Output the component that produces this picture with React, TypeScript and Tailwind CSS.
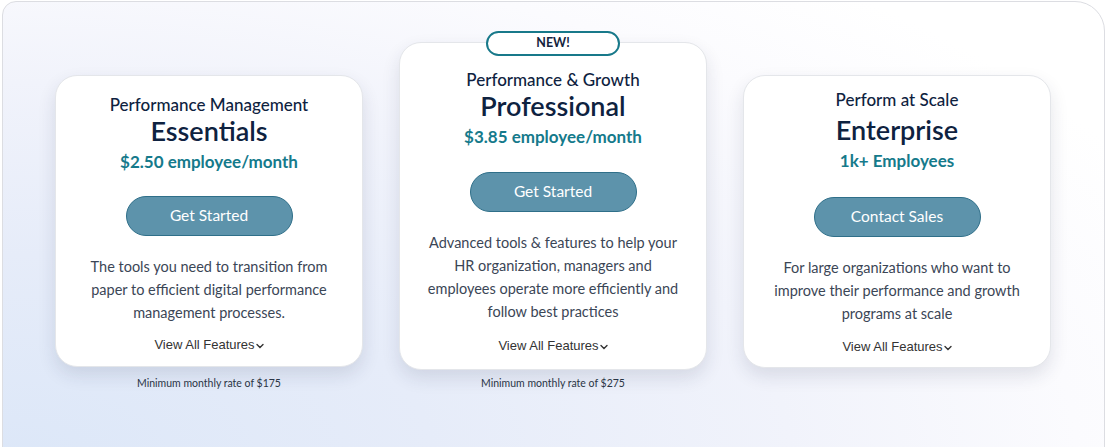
import React from 'react';

const FONT = { fontFamily: 'Lato, "Noto Sans", sans-serif' };

type Plan = {
  eyebrow: string;
  name: string;
  price: string;
  cta: string;
  lines: string[];
  minimum?: string;
  badge?: string;
  top: string;
  card: string;
  nameGap: string;
  priceGap: string;
  buttonGap: string;
  descGap: string;
  featuresGap: string;
  minGap?: string;
};

const plans: Plan[] = [
  {
    eyebrow: 'Performance Management',
    name: 'Essentials',
    price: '$2.50 employee/month',
    cta: 'Get Started',
    lines: ['The tools you need to transition from', 'paper to efficient digital performance', 'management processes.'],
    minimum: 'Minimum monthly rate of $175',
    top: 'mt-[73px]',
    card: 'pt-[18px] pb-[13px]',
    nameGap: 'mt-0',
    priceGap: 'mt-[3px]',
    buttonGap: 'mt-[21px]',
    descGap: 'mt-[19px]',
    featuresGap: 'mt-[13px]',
    minGap: 'mt-[9px]',
  },
  {
    eyebrow: 'Performance & Growth',
    name: 'Professional',
    price: '$3.85 employee/month',
    cta: 'Get Started',
    lines: [
      'Advanced tools & features to help your',
      'HR organization, managers and',
      'employees operate more efficiently and',
      'follow best practices',
    ],
    minimum: 'Minimum monthly rate of $275',
    badge: 'NEW!',
    top: 'mt-[40px]',
    card: 'pt-[26px] pb-[15px]',
    nameGap: 'mt-0',
    priceGap: 'mt-[3px]',
    buttonGap: 'mt-[22px]',
    descGap: 'mt-[19px]',
    featuresGap: 'mt-[15px]',
    minGap: 'mt-[6px]',
  },
  {
    eyebrow: 'Perform at Scale',
    name: 'Enterprise',
    price: '1k+ Employees',
    cta: 'Contact Sales',
    lines: ['For large organizations who want to', 'improve their performance and growth', 'programs at scale'],
    top: 'mt-[73px]',
    card: 'pt-[13px] pb-[12px]',
    nameGap: 'mt-[4px]',
    priceGap: 'mt-[3px]',
    buttonGap: 'mt-[23px]',
    descGap: 'mt-[19px]',
    featuresGap: 'mt-[14px]',
  },
];

function Chevron() {
  return (
    <svg width="8" height="6" viewBox="0 0 8 6" className="ml-[1px] mt-[1px]" aria-hidden>
      <path d="M1 1.5 L4 4.5 L7 1.5" fill="none" stroke="#333" strokeWidth="1.4" strokeLinecap="round" />
    </svg>
  );
}

function PlanCard({ plan }: { plan: Plan }) {
  return (
    <div className={`flex w-[308px] flex-col items-center ${plan.top}`}>
      <div className="relative w-full">
        {plan.badge && (
          <div className="absolute left-1/2 top-[-11px] flex h-[25px] w-[134px] -translate-x-1/2 items-center justify-center rounded-full border-2 border-[#18798a] bg-white text-[12.5px] font-bold text-[#14233d]">
            {plan.badge}
          </div>
        )}
        <div
          className={`flex w-full flex-col items-center rounded-[22px] border border-[#e4e6ea] bg-white shadow-[0_8px_18px_rgba(30,40,70,0.12)] ${plan.card}`}
        >
          <div className="text-[17px] font-medium leading-[22px] text-[#0e2240]">{plan.eyebrow}</div>
          <div className={`text-[27px] font-semibold leading-[30px] text-[#0e2240] ${plan.nameGap}`}>{plan.name}</div>
          <div className={`text-[17px] font-bold leading-[26px] text-[#157a8b] ${plan.priceGap}`}>{plan.price}</div>
          <button
            className={`flex h-[40px] w-[167px] items-center justify-center rounded-full border border-[#2f6f89] bg-[#5d93ab] text-[15.5px] text-white ${plan.buttonGap}`}
          >
            {plan.cta}
          </button>
          <div className={`text-center text-[14.5px] leading-[23px] text-[#3b4656] ${plan.descGap}`}>
            {plan.lines.map((l) => (
              <div key={l}>{l}</div>
            ))}
          </div>
          <div
            className={`flex items-center text-[13px] leading-[16px] text-[#333] ${plan.featuresGap}`}
            style={{ fontFamily: '"Liberation Sans", Arial, sans-serif' }}
          >
            View All Features
            <Chevron />
          </div>
        </div>
      </div>
      {plan.minimum && (
        <div className={`text-[10.5px] leading-[14px] text-[#2b3646] ${plan.minGap}`}>{plan.minimum}</div>
      )}
    </div>
  );
}

export default function App() {
  return (
    <div className="h-[447px] w-[1108px] overflow-hidden bg-white" style={FONT}>
      <div className="ml-[2px] mt-[1px] h-[460px] w-[1103px] rounded-tl-[14px] rounded-tr-[30px] border border-[#dcdde2] bg-[radial-gradient(ellipse_130%_150%_at_0%_100%,#dce7f8_0%,#e6ecf9_30%,#f1f3fb_55%,#fbfbfe_75%,#ffffff_90%)]">
        <div className="flex gap-[36px] pl-[52px]">
          {plans.map((p) => (
            <PlanCard key={p.name} plan={p} />
          ))}
        </div>
      </div>
    </div>
  );
}
